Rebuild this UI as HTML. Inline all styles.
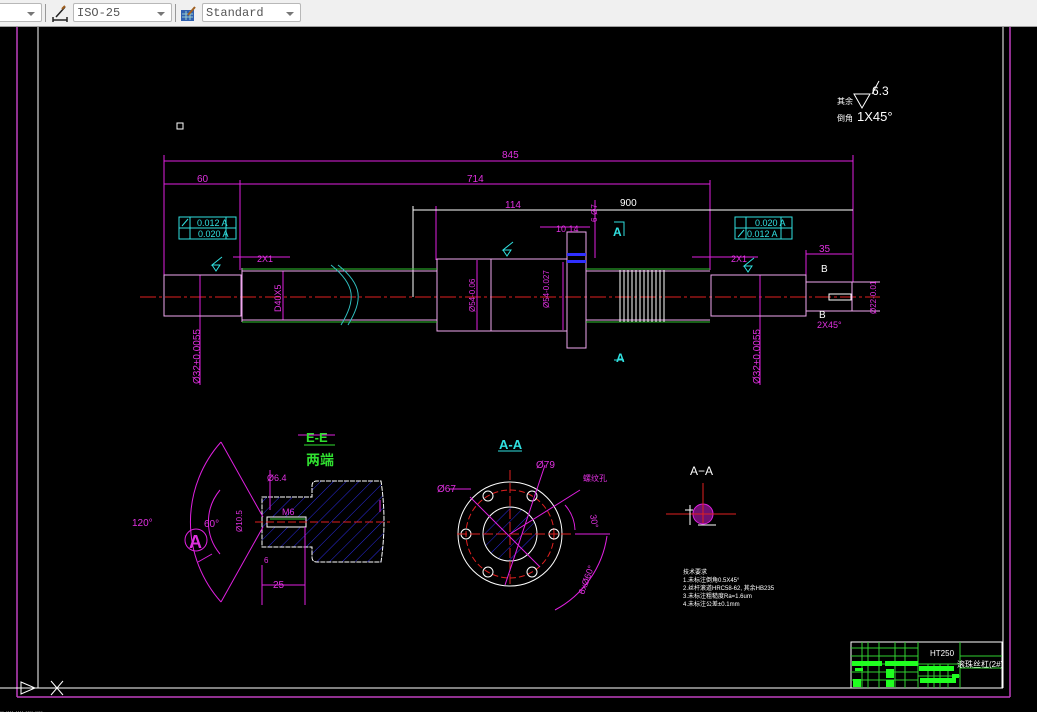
<!DOCTYPE html>
<html><head><meta charset="utf-8"><style>
html,body{margin:0;padding:0;width:1037px;height:712px;overflow:hidden;background:#000}
.tb{position:absolute;left:0;top:0;width:1037px;height:26px;background:#f0f0f0;border-bottom:1px solid #a0a0a0}
.cb{position:absolute;top:3px;height:19px;background:#fff;border:1px solid #b8b8b8;border-radius:2px;font:12px "Liberation Mono",monospace;color:#555;line-height:19px;padding-left:3px;box-sizing:border-box}
.cb:after{content:"";position:absolute;right:6px;top:8px;border-left:4px solid transparent;border-right:4px solid transparent;border-top:4px solid #777}
.sep{position:absolute;top:4px;width:1px;height:18px;background:#999}
svg{position:absolute;left:0;top:0}
text{font-family:"Liberation Sans","Noto Sans CJK SC",sans-serif}
</style></head><body>
<div class="tb">
<div class="cb" style="left:-2px;width:44px"></div>
<div class="sep" style="left:45px"></div>
<svg style="left:51px;top:4px" width="18" height="18"><path d="M2 16h14M2 13v5M16 13v5M5 13l9-10" stroke="#222" stroke-width="1.5" fill="none"/><path d="M11 5l3-3" stroke="#a06020" stroke-width="2"/></svg>
<div class="cb" style="left:73px;width:99px">ISO-25</div>
<div class="sep" style="left:175px"></div>
<svg style="left:180px;top:5px" width="17" height="17"><rect x="1" y="5" width="13" height="11" fill="#3060b0"/><path d="M2 9h11M2 12h11M6 6v9M10 6v9" stroke="#9cc" stroke-width="1"/><path d="M8 10l7-8" stroke="#a06020" stroke-width="2"/></svg>
<div class="cb" style="left:202px;width:99px">Standard</div>
</div>
<svg width="1037" height="712" viewBox="0 0 1037 712" style="top:0">
<defs>
<pattern id="h" patternUnits="userSpaceOnUse" width="9" height="9" patternTransform="rotate(45)"><line x1="0" y1="0" x2="0" y2="9" stroke="#2a2ae0" stroke-width="1"/></pattern>
</defs>
<g fill="none">
<line x1="17" y1="27" x2="17" y2="697" stroke="#c040c0" stroke-width="1.5"/>
<line x1="17" y1="697" x2="1010" y2="697" stroke="#c040c0" stroke-width="1.5"/>
<line x1="1010" y1="27" x2="1010" y2="697" stroke="#c040c0" stroke-width="1.5"/>
<line x1="38" y1="27" x2="38" y2="688" stroke="#fff"/>
<line x1="1003" y1="27" x2="1003" y2="688" stroke="#fff"/>
<line x1="0" y1="688" x2="1003" y2="688" stroke="#fff"/>
<path d="M21 682l14 6-14 6z M21 682v12" stroke="#fff"/>
<path d="M51 681l12 14M63 681l-12 14" stroke="#fff"/>
<rect x="177" y="123" width="6" height="6" stroke="#fff"/>
<line x1="140" y1="297" x2="880" y2="297" stroke="#e02020" stroke-dasharray="16,3,3,3"/>
<g stroke="#e020e0">
<line x1="164" y1="161" x2="853" y2="161"/>
<line x1="164" y1="184" x2="710" y2="184"/>
<line x1="164" y1="155" x2="164" y2="276"/><line x1="853" y1="155" x2="853" y2="282"/>
<line x1="240" y1="180" x2="240" y2="270"/><line x1="710" y1="180" x2="710" y2="270"/>
<line x1="436" y1="206" x2="436" y2="260"/><line x1="436" y1="210" x2="584" y2="210"/>
<line x1="806" y1="254" x2="852" y2="254"/><line x1="806" y1="250" x2="806" y2="282"/>
<line x1="200" y1="275" x2="200" y2="385"/><line x1="760" y1="275" x2="760" y2="385"/>
<line x1="283" y1="271" x2="283" y2="320"/><line x1="477" y1="260" x2="477" y2="330"/><line x1="563" y1="262" x2="563" y2="330"/>
<line x1="233" y1="257" x2="290" y2="257"/><line x1="692" y1="257" x2="758" y2="257"/>
<line x1="540" y1="227" x2="590" y2="227"/><line x1="595" y1="200" x2="595" y2="258"/>
</g>
<line x1="413" y1="210" x2="853" y2="210" stroke="#fff"/><line x1="413" y1="206" x2="413" y2="297" stroke="#fff"/>
<g stroke="#f0a8f0">
<rect x="164" y="275" width="77" height="41"/>
<path d="M242 271h195M242 320h195M242 268v54"/>
<rect x="437" y="259" width="130" height="72"/><line x1="491" y1="259" x2="491" y2="331"/>
<rect x="567" y="232" width="19" height="116"/>
<path d="M586 271h124M586 320h124"/>
<rect x="711" y="275" width="95" height="41"/>
<path d="M806 282h74M806 311h74M852 282v29"/>
</g>
<path d="M242 269h195M242 322h195M586 269h124M586 322h124" stroke="#30c030"/>
<path d="M331 265c25 20 25 35 10 60M338 265c25 20 25 35 10 60" stroke="#30c0c0"/>
<rect x="829" y="294" width="22" height="6" stroke="#fff"/>
<g stroke="#fff" stroke-width="1">
<path d="M620 270v52M624 270v52M628 270v52M632 270v52M636 270v52M640 270v52M644 270v52M648 270v52M652 270v52M656 270v52M660 270v52M664 270v52"/>
</g>
<rect x="567" y="253" width="19" height="3" fill="#3030ff"/><rect x="567" y="260" width="19" height="3" fill="#3030ff"/>
<g stroke="#30e0e0">
<rect x="179" y="217" width="57" height="11"/><rect x="179" y="228" width="57" height="11"/>
<path d="M190 217v22M226 217v22M735 217h57v22h-57zM735 228h57M746 217v22M781 217v22"/>
<path d="M182 226l6-7M738 237l6-7M212 265l4 6 4-6h-8l10-8M503 250l4 6 4-6h-8l10-8M744 266l4 6 4-6h-8l10-8"/>
<path d="M614 222h10v14M614 360h10"/>
</g>
<path d="M262 497h50v-11q0-5 5-5h64q6 40 0 81h-64q-5 0-5-5v-10h-50z" stroke="#fff" stroke-dasharray="5,1" fill="url(#h)"/>
<rect x="267" y="517" width="39" height="10" stroke="#fff" fill="#000"/>
<line x1="270" y1="519" x2="305" y2="519" stroke="#30c030"/>
<line x1="255" y1="522" x2="390" y2="522" stroke="#e02020" stroke-dasharray="8,3"/>
<g stroke="#e020e0">
<path d="M221 442A120 120 0 0 0 221 602M221 442l42 75M221 602l42-75M220 490A50 50 0 0 0 220 554M262 565v40M305 527v78M262 585h43M270 470v40M298 435h37M380 500v12"/>
<circle cx="196" cy="540" r="11"/><line x1="198" y1="562" x2="212" y2="554"/>
</g>
<circle cx="510" cy="534" r="52" stroke="#fff"/>
<circle cx="510" cy="534" r="27" stroke="#fff" fill="url(#h)"/>
<circle cx="510" cy="534" r="44" stroke="#e02020" stroke-dasharray="6,3"/>
<g stroke="#fff"><circle cx="554" cy="534" r="5"/><circle cx="466" cy="534" r="5"/><circle cx="532" cy="496" r="5"/><circle cx="488" cy="496" r="5"/><circle cx="532" cy="572" r="5"/><circle cx="488" cy="572" r="5"/></g>
<path d="M457 534h114M510 470v114" stroke="#e02020" stroke-dasharray="10,3"/>
<g stroke="#e020e0"><path d="M470 497l70 70M545 465l-40 120M580 490l-70 44M575 534h35M607 536A100 100 0 0 1 555 610M565 505A40 40 0 0 1 575 530M449 489h22"/></g>
<line x1="498" y1="451" x2="522" y2="451" stroke="#30e0e0"/><path d="M304 445h31" stroke="#30e030"/>
<circle cx="703" cy="514" r="10" stroke="#e020e0" fill="#701070"/>
<path d="M666 514h70M703 483v40" stroke="#e02020"/>
<path d="M690 505v20M698 525h18M685 510h8" stroke="#fff"/>
<path d="M862 108l-8-14h16zM872 94l7-13" stroke="#fff"/>
<rect x="851" y="642" width="151" height="46" stroke="#fff"/>
<g stroke="#30d030">
<path d="M851 648h67M851 656h67M851 664h67M851 672h67M851 680h67M862 642v46M868 642v46M879 642v46M895 642v46M905 642v46M918 642v46M918 664h42M918 676h42M960 642v46M960 656h42M960 668h42M928 664v24M934 664v24M940 664v24M948 664v24"/>
</g>
<g fill="#20ff20"><rect x="852" y="661" width="30" height="5"/><rect x="885" y="661" width="33" height="5"/><rect x="919" y="666" width="35" height="5"/><rect x="855" y="668" width="8" height="3"/><rect x="886" y="669" width="8" height="9"/><rect x="853" y="679" width="8" height="8"/><rect x="886" y="680" width="8" height="7"/><rect x="920" y="678" width="36" height="5"/><rect x="952" y="674" width="7" height="4"/></g>
</g>
<g fill="#e030e0" font-size="10">
<text x="502" y="158">845</text><text x="197" y="182">60</text><text x="467" y="182">714</text>
<text x="505" y="208">114</text><text x="819" y="252">35</text><text x="556" y="232" font-size="9">10 14</text>
<text x="257" y="262" font-size="9">2X1</text><text x="731" y="262" font-size="9">2X1</text>
<text x="817" y="328" font-size="9">2X45°</text>
<text transform="translate(200 384) rotate(-90)" font-size="10">Ø32±0.0055</text>
<text transform="translate(760 384) rotate(-90)" font-size="10">Ø32±0.0055</text>
<text transform="translate(281 312) rotate(-90)" font-size="9">D40X5</text>
<text transform="translate(475 312) rotate(-90)" font-size="8">Ø54-0.06</text>
<text transform="translate(549 308) rotate(-90)" font-size="8">Ø54-0.027</text>
<text transform="translate(876 314) rotate(-90)" font-size="8">Ø22-0.01</text>
<text transform="translate(597 222) rotate(-90)" font-size="8">6-Ø7</text>
<text x="132" y="526">120°</text><text x="204" y="527">60°</text><text x="267" y="481" font-size="9">Ø6.4</text>
<text x="273" y="588">25</text><text x="282" y="515" font-size="9">M6</text>
<text transform="translate(242 532) rotate(-90)" font-size="8">Ø10.5</text><text x="264" y="563" font-size="8">6</text>
<text x="536" y="468">Ø79</text><text x="437" y="492">Ø67</text><text x="583" y="481" font-size="8">螺纹孔</text>
<text transform="translate(590 515) rotate(80)" font-size="9">30°</text>
<text transform="translate(584 595) rotate(-70)" font-size="9">6xØ60°</text>
<text x="189" y="548" font-size="18" font-weight="bold">A</text>
</g>
<g fill="#fff" font-size="10"><text x="620" y="206">900</text></g>
<g fill="#30e0e0" font-size="9"><text x="197" y="226">0.012 A</text><text x="198" y="237">0.020 A</text><text x="755" y="226">0.020 A</text><text x="747" y="237">0.012 A</text>
<text x="613" y="236" font-size="12" font-weight="bold">A</text><text x="616" y="362" font-size="12" font-weight="bold">A</text>
<text x="499" y="449" font-size="13" font-weight="bold">A-A</text></g>
<g fill="#30e030" font-weight="bold"><text x="306" y="442" font-size="13">E-E</text><text x="306" y="465" font-size="14">两端</text></g>
<g fill="#fff">
<text x="821" y="272" font-size="10">B</text><text x="819" y="318" font-size="10">B</text>
<text x="690" y="475" font-size="12">A−A</text>
<text x="837" y="104" font-size="8">其余</text><text x="837" y="121" font-size="8">倒角</text><text x="857" y="121" font-size="13">1X45°</text><text x="872" y="95" font-size="12">6.3</text>
<text x="930" y="656" font-size="8">HT250</text><text x="957" y="667" font-size="8">滚珠丝杠(2#)</text>
<g font-size="6"><text x="683" y="574">技术要求</text><text x="683" y="582">1.未标注倒角0.5X45°</text><text x="683" y="590">2.丝杆滚道HRC58-62, 其余HB235</text><text x="683" y="598">3.未标注粗糙度Ra=1.6um</text><text x="683" y="606">4.未标注公差±0.1mm</text></g>
<text x="0" y="712" font-size="7" fill="#aaa">..  ....  ....  ....  ....</text>
</g>
</svg>
</body></html>
